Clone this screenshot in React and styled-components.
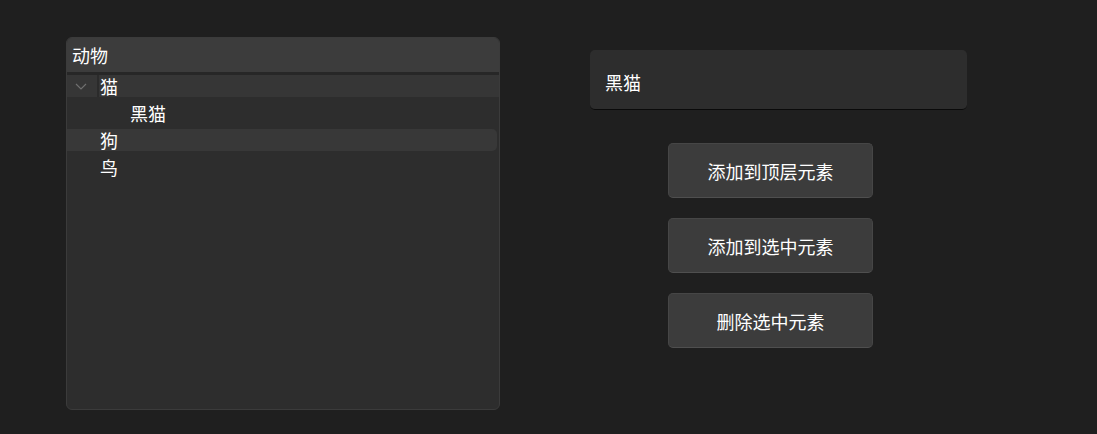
import React from "react";
import styled, { createGlobalStyle } from "styled-components";

const Global = createGlobalStyle`
  html, body { margin: 0; padding: 0; background: #1f1f1f; }
  body {
    font-family: "Noto Sans CJK SC", "Noto Sans", sans-serif;
    color: #ffffff;
    width: 1097px;
    height: 434px;
    overflow: hidden;
  }
`;

const Page = styled.div`
  display: flex;
  align-items: flex-start;
  padding: 37px 0 0 66px;
  gap: 90px;
  height: 434px;
  box-sizing: border-box;
`;

const TreePanel = styled.div`
  width: 434px;
  height: 373px;
  box-sizing: border-box;
  background: #2d2d2d;
  border: 1px solid #3b3b3b;
  border-radius: 6px;
  overflow: hidden;
  display: flex;
  flex-direction: column;
`;

const TreeHeader = styled.div`
  height: 34px;
  box-sizing: border-box;
  background: #3c3c3c;
  border-bottom: 3px solid #272727;
  display: flex;
  align-items: center;
  padding: 0 0 1px 5px;
  font-size: 18px;
  line-height: 1;
  height: 37px;
`;

const TreeList = styled.div`
  display: flex;
  flex-direction: column;
  gap: 5px;
`;

const Row = styled.div`
  position: relative;
  height: 22px;
  box-sizing: border-box;
  display: flex;
  align-items: center;
  font-size: 18px;
  line-height: 1;
  padding: 0 0 1px ${(p) => 33 + p.$level * 30}px;
  margin-right: ${(p) => (p.$selected ? 2 : 0)}px;
  border-radius: ${(p) => (p.$selected ? "0 5px 5px 0" : "0")};
  background: ${(p) => (p.$hover ? "#363636" : p.$selected ? "#383838" : "transparent")};
`;

const Chevron = styled.svg`
  position: absolute;
  left: 8px;
  top: 8px;
`;

const Divider = styled.span`
  position: absolute;
  left: 30px;
  top: 0;
  width: 2px;
  height: 100%;
  background: #2b2b2b;
`;

const RightCol = styled.div`
  display: flex;
  flex-direction: column;
  padding-top: 13px;
`;

const TextBox = styled.div`
  width: 377px;
  height: 60px;
  box-sizing: border-box;
  background: #2d2d2d;
  border-radius: 5px;
  border-bottom: 1px solid #0a0a0a;
  display: flex;
  align-items: center;
  padding: 4px 0 0 15px;
  font-size: 18px;
  line-height: 1;
`;

const Buttons = styled.div`
  display: flex;
  flex-direction: column;
  gap: 20px;
  margin: 33px 0 0 78px;
`;

const Button = styled.button`
  width: 205px;
  height: 55px;
  box-sizing: border-box;
  background: #3c3c3c;
  border: 1px solid #464646;
  border-bottom-color: #4f4f4f;
  border-radius: 5px;
  color: #ffffff;
  font-family: "Noto Sans CJK SC", "Noto Sans", sans-serif;
  font-size: 18px;
  line-height: 1;
  padding: 1px 0 0;
  cursor: pointer;
`;

export default function App() {
  return (
    <>
      <Global />
      <Page>
        <TreePanel>
          <TreeHeader>动物</TreeHeader>
          <TreeList>
            <Row $level={0} $hover>
              <Chevron width="12" height="7" viewBox="0 0 12 7">
                <path d="M1 1 L6 6 L11 1" fill="none" stroke="#6f6f6f" strokeWidth="1.2" />
              </Chevron>
              <Divider />
              猫
            </Row>
            <Row $level={1}>黑猫</Row>
            <Row $level={0} $selected>狗</Row>
            <Row $level={0}>鸟</Row>
          </TreeList>
        </TreePanel>
        <RightCol>
          <TextBox>黑猫</TextBox>
          <Buttons>
            <Button>添加到顶层元素</Button>
            <Button>添加到选中元素</Button>
            <Button>删除选中元素</Button>
          </Buttons>
        </RightCol>
      </Page>
    </>
  );
}
